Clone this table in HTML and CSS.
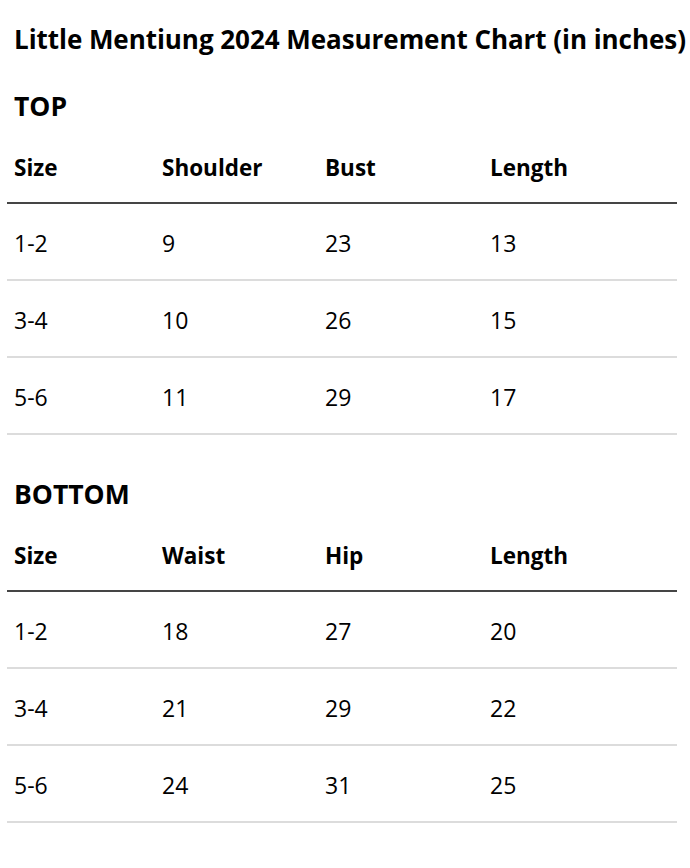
FILE: index.html
```html
<!DOCTYPE html>
<html lang="en">
<head>
<meta charset="utf-8">
<title>Little Mentiung 2024 Measurement Chart</title>
<link rel="stylesheet" href="styles.css">
</head>
<body>
<main class="page">
  <h1 class="title">Little Mentiung 2024 Measurement Chart (in inches)</h1>

  <section class="section">
    <h2 class="section-title">TOP</h2>
    <table class="chart">
      <colgroup>
        <col class="c1"><col class="c2"><col class="c3"><col class="c4">
      </colgroup>
      <thead>
        <tr><th>Size</th><th>Shoulder</th><th>Bust</th><th>Length</th></tr>
      </thead>
      <tbody>
        <tr><td>1-2</td><td>9</td><td>23</td><td>13</td></tr>
        <tr><td>3-4</td><td>10</td><td>26</td><td>15</td></tr>
        <tr><td>5-6</td><td>11</td><td>29</td><td>17</td></tr>
      </tbody>
    </table>
  </section>

  <section class="section section-bottom">
    <h2 class="section-title">BOTTOM</h2>
    <table class="chart">
      <colgroup>
        <col class="c1"><col class="c2"><col class="c3"><col class="c4">
      </colgroup>
      <thead>
        <tr><th>Size</th><th>Waist</th><th>Hip</th><th>Length</th></tr>
      </thead>
      <tbody>
        <tr><td>1-2</td><td>18</td><td>27</td><td>20</td></tr>
        <tr><td>3-4</td><td>21</td><td>29</td><td>22</td></tr>
        <tr><td>5-6</td><td>24</td><td>31</td><td>25</td></tr>
      </tbody>
    </table>
  </section>
</main>
</body>
</html>
```
FILE: styles.css
```css
* { box-sizing: border-box; }

html, body {
  margin: 0;
  padding: 0;
  background: #ffffff;
}

body {
  font-family: "Open Sans", Lato, "Liberation Sans", sans-serif;
  color: #000000;
}

.page {
  padding: 22px 0 0 7px;
}

.title {
  margin: 0 0 32px;
  padding-left: 7px;
  font-size: 26px;
  line-height: 34px;
  font-weight: 700;
  white-space: nowrap;
  letter-spacing: -0.05px;
}

.section-title {
  margin: 0;
  padding-left: 7px;
  font-size: 26.5px;
  line-height: 36px;
  font-weight: 700;
}

.section-bottom {
  margin-top: 41px;
}

.chart {
  width: 670px;
  border-collapse: collapse;
  table-layout: fixed;
  font-size: 23px;
  line-height: 32px;
}

.c1 { width: 148px; }
.c2 { width: 163px; }
.c3 { width: 165px; }
.c4 { width: 194px; }

.chart th {
  padding: 28px 7px 18px;
  text-align: left;
  font-size: 22.5px;
  font-weight: 700;
  border-bottom: 2px solid #454545;
}

.chart td {
  padding: 23px 7px 20px;
  text-align: left;
  font-weight: 400;
  border-bottom: 2px solid #dcdcdc;
}
```
